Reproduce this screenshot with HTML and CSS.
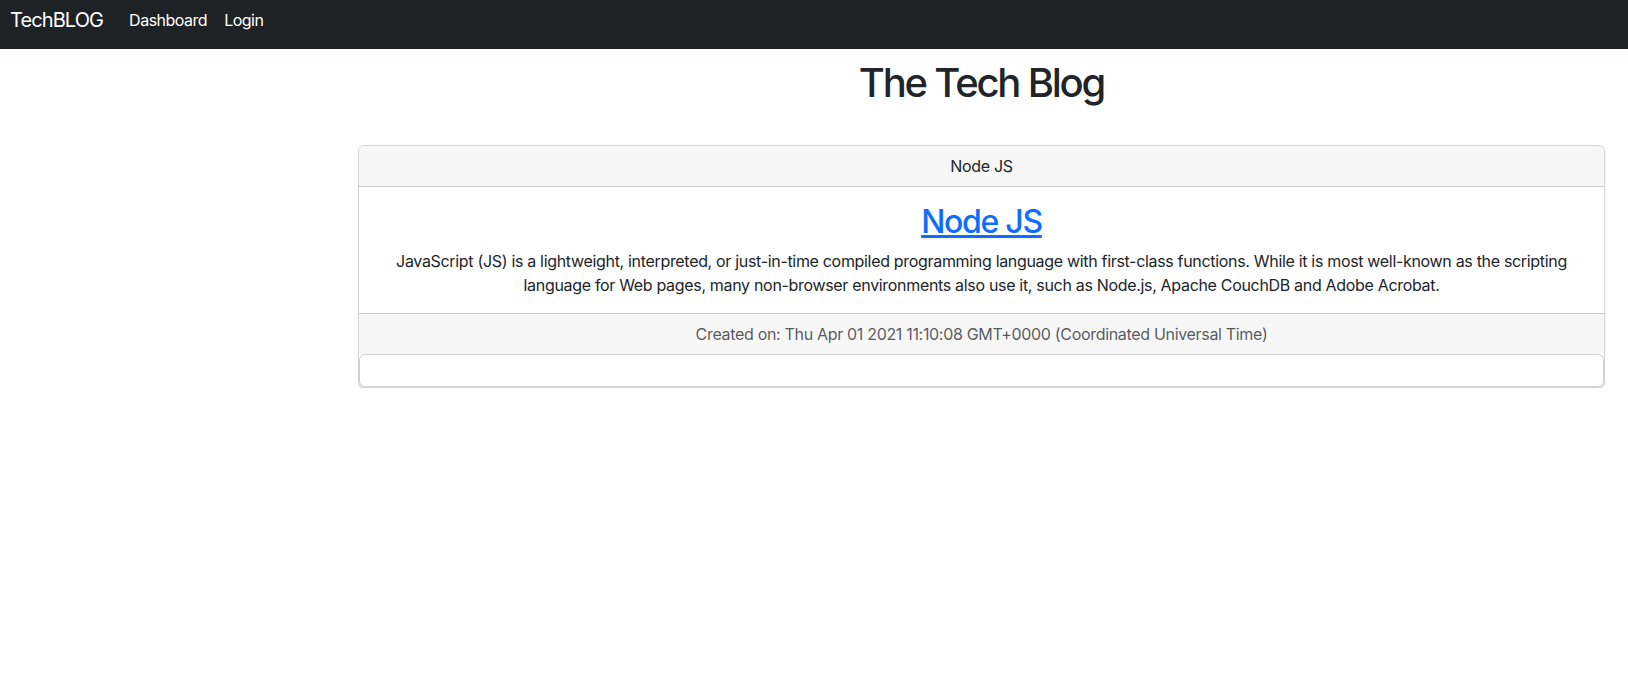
FILE: index.html
```html
<!DOCTYPE html>
<html lang="en">
<head>
<meta charset="utf-8">
<title>The Tech Blog</title>
<link rel="stylesheet" href="styles.css">
</head>
<body>
<nav class="navbar">
  <a class="brand" href="#">TechBLOG</a>
  <a class="nav-link" href="#">Dashboard</a>
  <a class="nav-link" href="#">Login</a>
</nav>
<div class="layout">
  <aside class="side"></aside>
  <main class="content">
    <h1 class="page-title">The Tech Blog</h1>
    <div class="card">
      <div class="card-header">Node JS</div>
      <div class="card-body">
        <h2 class="post-title"><a href="#">Node JS</a></h2>
        <p class="post-text">JavaScript (JS) is a lightweight, interpreted, or just-in-time compiled programming language with first-class functions. While it is most well-known as the scripting language for Web pages, many non-browser environments also use it, such as Node.js, Apache CouchDB and Adobe Acrobat.</p>
      </div>
      <div class="card-footer">Created on: Thu Apr 01 2021 11:10:08 GMT+0000 (Coordinated Universal Time)</div>
      <div class="comments"></div>
    </div>
  </main>
</div>
</body>
</html>
```

FILE: styles.css
```css
* { box-sizing: border-box; }
body {
  margin: 0;
  font-family: Inter, "Noto Sans", "Liberation Sans", sans-serif;
  font-size: 16px;
  line-height: 24px;
  letter-spacing: -0.32px;
  color: #212529;
  background: #fff;
}
.navbar {
  background: #1f2225;
  height: 49px;
  display: flex;
  align-items: flex-start;
  padding: 0 10px;
}
.brand {
  color: #fff;
  text-decoration: none;
  font-size: 20px;
  line-height: 30px;
  margin-top: 5px;
  letter-spacing: -0.9px;
  margin-right: 26px;
}
.nav-link {
  color: #fff;
  text-decoration: none;
  font-size: 16px;
  line-height: 24px;
  margin-top: 8px;
  letter-spacing: -0.5px;
  margin-right: 17px;
}
.layout {
  display: flex;
  padding-right: 23px;
}
.side {
  flex: 0 0 358px;
}
.content {
  flex: 1;
}
.page-title {
  margin: 10px 0 38px;
  text-align: center;
  font-size: 40px;
  line-height: 48px;
  font-weight: 500;
  letter-spacing: -2.2px;
}
.card {
  border: 1px solid rgba(0,0,0,.175);
  border-radius: 6px;
  box-shadow: 0 1px 1px rgba(0,0,0,.12);
}
.card-header {
  background: #f7f7f7;
  border-bottom: 1px solid rgba(0,0,0,.175);
  border-radius: 5px 5px 0 0;
  padding: 8px 16px;
  text-align: center;
}
.card-body {
  padding: 16px;
  text-align: center;
}
.post-title {
  margin: 0 0 8px;
  font-size: 32px;
  line-height: 38px;
  font-weight: 500;
  letter-spacing: -1.3px;
}
.post-title a {
  color: #0d6efd;
}
.post-text {
  margin: 0;
}
.card-footer {
  background: #f7f7f7;
  border-top: 1px solid rgba(0,0,0,.175);
  padding: 8px 16px;
  text-align: center;
  color: rgba(33,37,41,.75);
}
.comments {
  height: 33px;
  border: 1px solid rgba(0,0,0,.175);
  border-radius: 6px;
  background: #fff;
}
```
